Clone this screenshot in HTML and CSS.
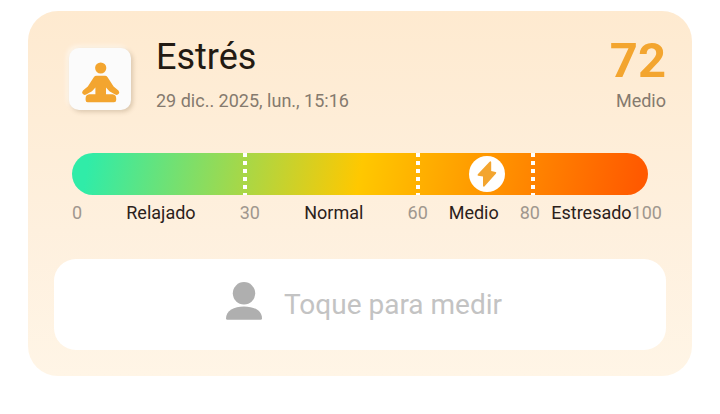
FILE: index.html
```html
<!DOCTYPE html>
<html lang="es">
<head>
  <meta charset="UTF-8">
  <meta name="viewport" content="width=device-width, initial-scale=1">
  <title>Estrés</title>
  <link rel="stylesheet" href="styles.css">
</head>
<body>
  <main class="card">
    <header class="card-header">
      <div class="icon-box">
        <svg viewBox="0 0 62 62" aria-hidden="true">
          <circle cx="31.7" cy="20" r="5.6"/>
          <path d="M27.5 27.8H36Q37.6 27.8 38.6 29.2L44.6 38.6L49.4 42.4Q51 44 49.8 45.8Q48.4 47.6 46.2 46.6L40.4 43.2L37 39.6V46.2H43.6Q47.2 46.6 47.2 50.4V52Q47.2 54.2 45 54.2H18.6Q16.6 54.2 16.6 52V50.4Q16.6 46.6 20.2 46.2H26.4V39.6L23 43.2L17.2 46.6Q15 47.6 13.6 45.8Q12.4 44 14 42.4L18.8 38.6L24.8 29.2Q25.8 27.8 27.5 27.8Z"/>
        </svg>
      </div>
      <div class="heading">
        <h1>Estrés</h1>
        <time datetime="2025-12-29T15:16">29 dic.. 2025, lun., 15:16</time>
      </div>
      <div class="score">
        <strong>72</strong>
        <span>Medio</span>
      </div>
    </header>

    <section class="scale">
      <div class="bar">
        <span class="tick" style="left: 30%"></span>
        <span class="tick" style="left: 60%"></span>
        <span class="tick" style="left: 80%"></span>
        <span class="marker" style="left: 72%">
          <svg viewBox="0 0 36 36" aria-hidden="true">
            <path d="M20.6 5.8L8.8 18.2Q8 19.4 9.2 19.7L14 20.6V29.8Q14.4 31.4 15.6 30.2L27 17.4Q27.8 16.2 26.6 16L22.2 15V6.2Q21.8 4.6 20.6 5.8Z"/>
          </svg>
        </span>
      </div>
      <div class="labels">
        <span class="number">0</span>
        <span class="zone zone-relaxed">Relajado</span>
        <span class="number">30</span>
        <span class="zone zone-normal">Normal</span>
        <span class="number">60</span>
        <span class="zone">Medio</span>
        <span class="number">80</span>
        <span class="zone zone-stressed">Estresado</span>
        <span class="number">100</span>
      </div>
    </section>

    <button class="measure" type="button">
      <svg viewBox="0 0 36 38" aria-hidden="true">
        <circle cx="18" cy="11.3" r="11.2"/>
        <path d="M0 36.4C0 28.6 8 24.4 18 24.4S36 28.6 36 36.4Q36 37.8 34.6 37.8H1.4Q0 37.8 0 36.4Z"/>
      </svg>
      <span>Toque para medir</span>
    </button>
  </main>
</body>
</html>
```

FILE: styles.css
```css
* {
  box-sizing: border-box;
}

body {
  margin: 0;
  background-color: #fff;
  font-family: Roboto, "Liberation Sans", sans-serif;
  font-size: 18px;
  line-height: 24px;
  color: #2b211a;
}

.card {
  margin: 11px 28px;
  padding: 24px 26px 26px;
  border-radius: 30px;
  background: linear-gradient(#feead0, #fef0de 60%, #fff5e6);
}

/* header */
.card-header {
  display: flex;
  align-items: flex-end;
  padding-left: 15px;
}

.icon-box {
  width: 62px;
  height: 62px;
  margin-bottom: 3px;
  border-radius: 10px;
  background-color: #fbfbfb;
  box-shadow: 2px 2px 4px rgba(120, 90, 50, 0.25), -2px -2px 5px rgba(255, 255, 255, 0.6);
}

.icon-box svg {
  display: block;
  fill: #f3a52f;
}

.heading {
  flex: 1;
  display: flex;
  flex-direction: column;
  gap: 10px;
  margin-left: 25px;
}

.heading h1 {
  margin: 0;
  font-size: 36px;
  font-weight: 400;
  line-height: 44px;
  color: #231a12;
}

.heading time,
.score span {
  color: #857a6e;
}

.score {
  display: flex;
  flex-direction: column;
  gap: 3px;
  text-align: right;
}

.score strong {
  font-size: 49px;
  line-height: 50px;
  font-weight: 700;
  color: #f3a52f;
}

/* scale */
.scale {
  margin: 40px 18px 34px;
}

.bar {
  position: relative;
  height: 42px;
  border-radius: 21px;
  background: linear-gradient(100deg, #30eca8 3%, #ffc800 50%, #ff5a00 98%);
}

.tick {
  position: absolute;
  top: 0;
  bottom: 0;
  width: 4px;
  transform: translateX(-50%);
  background: repeating-linear-gradient(#fff 0 4px, transparent 4px 8px);
}

.marker {
  position: absolute;
  top: 50%;
  width: 36px;
  height: 36px;
  border-radius: 50%;
  background-color: #fff;
  transform: translate(-50%, -50%);
}

.marker svg {
  display: block;
  fill: #f3a52f;
}

/* the last number runs past the end of the bar */
.labels {
  display: flex;
  margin: 6px -14px 0 0;
}

.number {
  color: #a0978e;
}

.zone {
  flex: 92 1 0;
  text-align: center;
}

.zone-relaxed {
  flex-grow: 158;
}

.zone-normal {
  flex-grow: 148;
}

.zone-stressed {
  text-align: right;
}

/* button */
.measure {
  display: flex;
  justify-content: center;
  align-items: center;
  gap: 22px;
  width: 100%;
  padding: 23px 16px 22px 24px;
  border: none;
  border-radius: 22px;
  background-color: #fff;
  font-family: inherit;
  font-size: 28px;
  line-height: 40px;
  color: #c3c3c3;
  cursor: pointer;
}

.measure svg {
  width: 36px;
  height: 38px;
  margin-bottom: 8px;
  fill: #afafaf;
}
```
